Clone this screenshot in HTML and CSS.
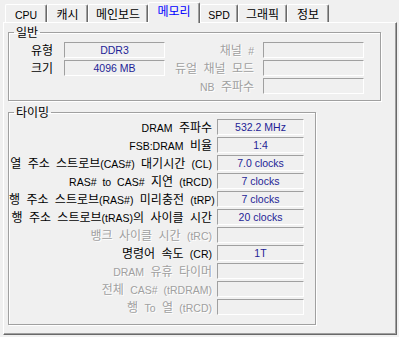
FILE: index.html
```html
<!DOCTYPE html>
<html lang="ko">
<head>
    <meta charset="UTF-8">
    <title>CPU-Z 메모리</title>
    <link rel="stylesheet" href="styles.css">
</head>
<body>
    <div class="tabs">
        <div class="tab w-cpu"><span class="en">CPU</span></div>
        <div class="tab w-cache">캐시</div>
        <div class="tab w-mb">메인보드</div>
        <div class="tab w-mem active">메모리</div>
        <div class="tab w-spd"><span class="en">SPD</span></div>
        <div class="tab w-gfx">그래픽</div>
        <div class="tab w-about">정보</div>
    </div>

    <div class="panel">
        <fieldset class="group general">
            <legend>일반</legend>
            <div class="general-grid">
                <span class="lbl first">유형</span>
                <div class="box val">DDR3</div>
                <span class="lbl second off">채널 <span class="en">#</span></span>
                <div class="box"></div>

                <span class="lbl first">크기</span>
                <div class="box val">4096 MB</div>
                <span class="lbl second off">듀얼 채널 모드</span>
                <div class="box"></div>

                <span></span>
                <span></span>
                <span class="lbl second off"><span class="en">NB</span> 주파수</span>
                <div class="box"></div>
            </div>
        </fieldset>

        <fieldset class="group timing">
            <legend>타이밍</legend>
            <div class="timing-grid">
                <span class="lbl"><span class="en">DRAM</span> 주파수</span>
                <div class="box val">532.2 MHz</div>

                <span class="lbl"><span class="en">FSB:DRAM</span> 비율</span>
                <div class="box val">1:4</div>

                <span class="lbl">열 주소 스트로브<span class="en">(CAS#)</span> 대기시간 <span class="en">(CL)</span></span>
                <div class="box val">7.0 clocks</div>

                <span class="lbl"><span class="en">RAS# to CAS#</span> 지연 <span class="en">(tRCD)</span></span>
                <div class="box val">7 clocks</div>

                <span class="lbl">행 주소 스트로브<span class="en">(RAS#)</span> 미리충전 <span class="en">(tRP)</span></span>
                <div class="box val">7 clocks</div>

                <span class="lbl">행 주소 스트로브<span class="en">(tRAS)</span>의 사이클 시간</span>
                <div class="box val">20 clocks</div>

                <span class="lbl off">뱅크 사이클 시간 <span class="en">(tRC)</span></span>
                <div class="box"></div>

                <span class="lbl">명령어 속도 <span class="en">(CR)</span></span>
                <div class="box val">1T</div>

                <span class="lbl off"><span class="en">DRAM</span> 유휴 타이머</span>
                <div class="box"></div>

                <span class="lbl off">전체 <span class="en">CAS# (tRDRAM)</span></span>
                <div class="box"></div>

                <span class="lbl off">행 <span class="en">To</span> 열 <span class="en">(tRCD)</span></span>
                <div class="box"></div>
            </div>
        </fieldset>
    </div>
</body>
</html>
```

FILE: styles.css
```css
* {
    margin: 0;
    padding: 0;
    box-sizing: border-box;
}
body {
    width: 399px;
    height: 337px;
    overflow: hidden;
    background: #f0f0f0;
    font-family: "Noto Sans CJK KR", sans-serif;
    font-size: 12px;
    color: #000;
}
.en {
    font-family: "Liberation Sans", Arial, sans-serif;
    font-size: 10.5px;
}

/* onglets */
.tabs {
    display: flex;
    align-items: flex-end;
    height: 22px;
    padding-left: 5px;
}
.tab {
    height: 18px;
    padding-top: 1px;
    border-top: 1px solid #fff;
    border-left: 1px solid #fff;
    border-right: 1px solid #696969;
    border-radius: 2px 2px 0 0;
    box-shadow: inset -1px 0 0 #a0a0a0;
    text-align: center;
    line-height: 16px;
    white-space: nowrap;
}
.tab.active {
    height: 21px;
    margin-bottom: -1px;
    padding-top: 0;
    position: relative;
    z-index: 1;
    background: #f0f0f0;
    color: #0000ff;
}
.w-cpu { width: 42px; }
.w-cache { width: 41px; }
.w-mb { width: 60px; }
.w-mem { width: 52px; }
.w-spd { width: 38px; }
.w-gfx { width: 49px; }
.w-about { width: 42px; }

/* panneau */
.panel {
    margin-left: 3px;
    width: 394px;
    height: 313px;
    padding: 2px 0 0 4px;
    border-top: 1px solid #fff;
    border-left: 1px solid #fff;
    border-right: 1px solid #696969;
    border-bottom: 1px solid #696969;
    box-shadow: inset -1px -1px 0 #a0a0a0;
}
.group {
    border: 1px solid #a0a0a0;
    box-shadow: inset 1px 1px 0 #fff, 1px 1px 0 #fff;
}
.group legend {
    margin-left: 5px;
    padding: 0 2px;
    line-height: 14px;
}
.general {
    width: 373px;
    padding: 3px 0 6px 0;
}
.timing {
    width: 308px;
    margin-top: 4px;
    padding: 0 0 9px 0;
}

.general-grid {
    display: grid;
    grid-template-columns: 55px 101px 98px 101px;
    row-gap: 2px;
}
.timing-grid {
    display: grid;
    grid-template-columns: 208px 87px;
    row-gap: 2px;
}
.lbl {
    height: 16px;
    line-height: 16px;
    text-align: right;
    white-space: nowrap;
    word-spacing: 3px;
    padding-right: 5px;
}
.lbl.first {
    padding-right: 11px;
}
.lbl.second {
    padding-right: 9px;
}
.off {
    color: #a0a0a0;
    text-shadow: 1px 1px 0 #fff;
}
.box {
    height: 16px;
    border-top: 1px solid #a0a0a0;
    border-left: 1px solid #a0a0a0;
    border-bottom: 1px solid #fff;
    border-right: 1px solid #fff;
}
.val {
    text-align: center;
    font-family: "Liberation Sans", Arial, sans-serif;
    font-size: 10.5px;
    line-height: 14px;
    color: #1e1e96;
}
```
